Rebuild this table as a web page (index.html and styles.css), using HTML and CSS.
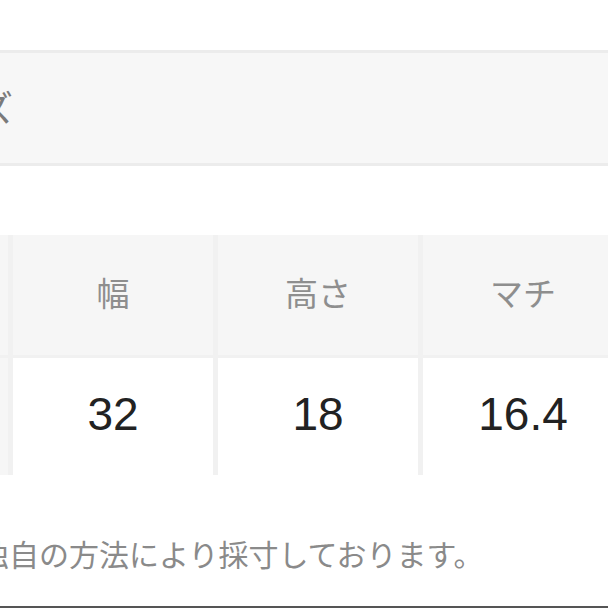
FILE: index.html
```html
<!DOCTYPE html>
<html lang="ja">
<head>
<meta charset="utf-8">
<link rel="stylesheet" href="styles.css">
</head>
<body>
<div class="page">
  <div class="bar"><span class="bar-title">ズ</span></div>
  <div class="size-table">
    <div class="cell head edge"></div>
    <div class="cell head">幅</div>
    <div class="cell head">高さ</div>
    <div class="cell head">マチ</div>
    <div class="cell head"></div>
    <div class="cell data edge"></div>
    <div class="cell data num">32</div>
    <div class="cell data num">18</div>
    <div class="cell data num">16.4</div>
    <div class="cell data num"></div>
  </div>
  <p class="note">独自の方法により採寸しております。</p>
  <div class="bottom-line"></div>
</div>
</body>
</html>
```
FILE: styles.css
```css
html, body {
  margin: 0;
  padding: 0;
  background: #ffffff;
  overflow: hidden;
}
.page {
  width: 608px;
  height: 608px;
  overflow: hidden;
  font-family: "Noto Sans CJK JP", "Noto Sans", sans-serif;
}
.bar {
  margin-top: 50px;
  height: 110px;
  background: #f7f7f7;
  border-top: 3px solid #ececec;
  border-bottom: 3px solid #ececec;
  display: flex;
  align-items: center;
}
.bar-title {
  margin-left: -23px;
  font-size: 36px;
  line-height: 40px;
  color: #7a7a7a;
  margin-top: -4px;
}
.size-table {
  margin-top: 69px;
  display: grid;
  grid-template-columns: 8px 200px 200px 200px 200px;
  grid-template-rows: 120px 117px;
  column-gap: 5px;
  row-gap: 3px;
  background: #f1f1f1;
  width: 828px;
}
.cell {
  display: flex;
  align-items: center;
  justify-content: center;
}
.head {
  background: #f6f6f6;
  color: #8e8e8e;
  font-size: 33px;
  padding-bottom: 6px;
  box-sizing: border-box;
}
.data {
  background: #ffffff;
}
.data.edge {
  background: #f6f6f6;
}
.num {
  font-family: "Liberation Sans", Arial, sans-serif;
  font-size: 46px;
  color: #222222;
  padding-bottom: 5px;
  box-sizing: border-box;
}
.note {
  margin: 58px 0 0 -21px;
  font-size: 30px;
  line-height: 40px;
  color: #8a8a8a;
  white-space: nowrap;
}
.bottom-line {
  margin-top: 33px;
  height: 2px;
  background: #555555;
}
```
